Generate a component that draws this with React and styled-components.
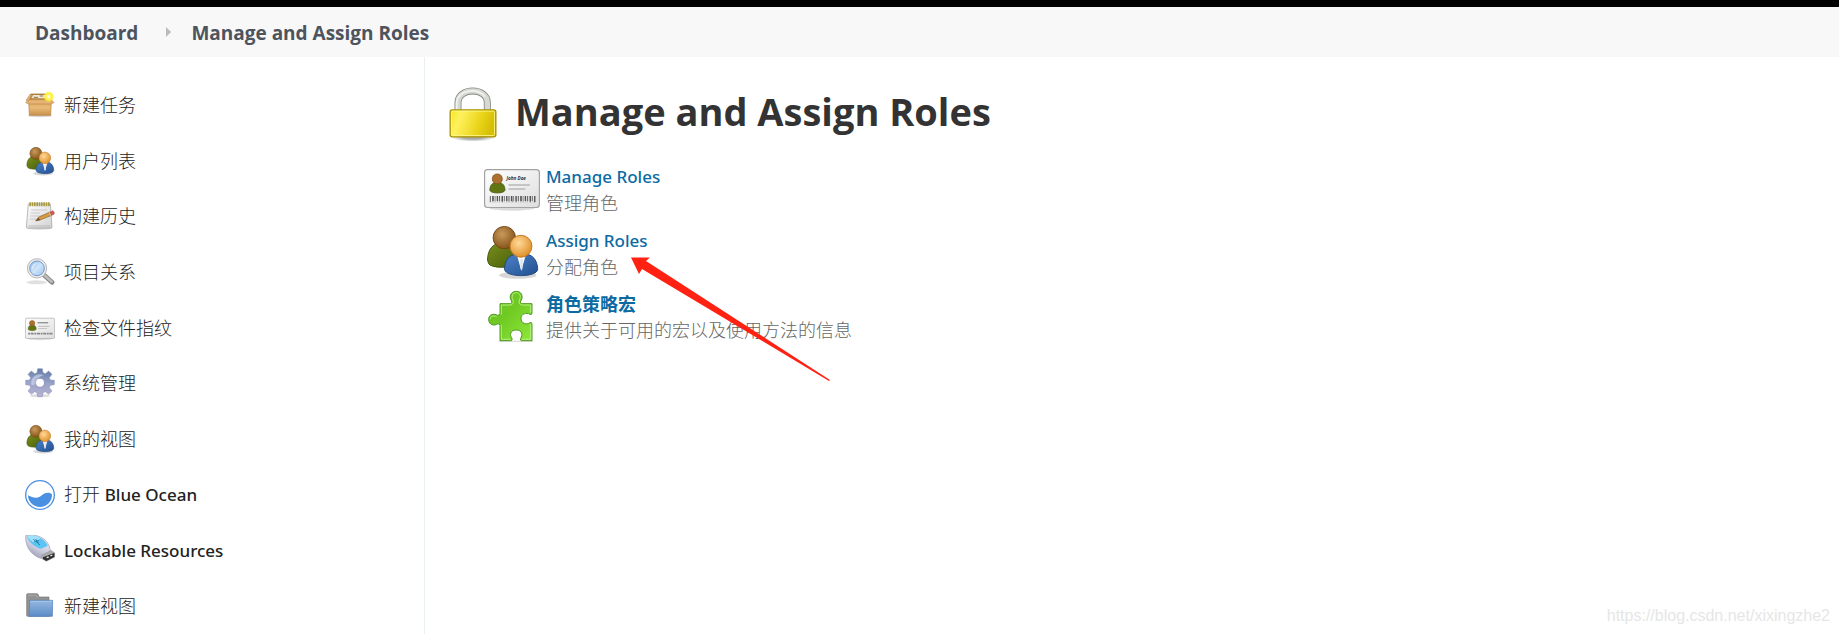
import React from "react";
import styled, { createGlobalStyle } from "styled-components";

function UsersIcon({ size }) {
  return (
    <Icon $size={size} viewBox="0 0 48 48" aria-hidden="true">
      <defs>
        <radialGradient id="headBack" cx="0.4" cy="0.35" r="0.65">
          <stop offset="0" stopColor="#c79a5a" />
          <stop offset="1" stopColor="#87541a" />
        </radialGradient>
        <radialGradient id="headFront" cx="0.4" cy="0.35" r="0.65">
          <stop offset="0" stopColor="#ffd999" />
          <stop offset="1" stopColor="#e0922c" />
        </radialGradient>
        <linearGradient id="bodyBack" x1="0" y1="0" x2="1" y2="1">
          <stop offset="0" stopColor="#7b8c1c" />
          <stop offset="1" stopColor="#46600b" />
        </linearGradient>
        <linearGradient id="bodyFront" x1="0" y1="0" x2="1" y2="1">
          <stop offset="0" stopColor="#4b80c8" />
          <stop offset="1" stopColor="#22508f" />
        </linearGradient>
      </defs>
      <ellipse cx="29" cy="44" rx="16" ry="3" fill="#000" opacity="0.16" />
      <path
        d="M3 31C3 22 8 16 14 17H22C28 19 31 26 27 35C23 38 6 38 4 34Z"
        fill="url(#bodyBack)"
        stroke="#3f560a"
        strokeWidth="0.8"
      />
      <circle cx="17.4" cy="11.7" r="9.6" fill="url(#headBack)" stroke="#714412" strokeWidth="0.8" />
      <path
        d="M17.6 39C17.6 31 22 26 28 26H37C43 27 46 33 46 39C45 46 19 46 17.6 39Z"
        fill="url(#bodyFront)"
        stroke="#1e467f"
        strokeWidth="0.8"
      />
      <path d="M28 26H36L32 40Z" fill="#fff" />
      <path d="M31.3 30H33.3L33 38L32 40L31 37Z" fill="#dbe4f0" />
      <circle cx="31.7" cy="19.1" r="9.4" fill="url(#headFront)" stroke="#bd7620" strokeWidth="0.8" />
    </Icon>
  );
}

function CardIcon({ size, name }) {
  return (
    <Icon $size={size} viewBox="0 0 48 48" aria-hidden="true">
      <defs>
        <linearGradient id="cardFill" x1="0" y1="0" x2="1" y2="1">
          <stop offset="0" stopColor="#fff" />
          <stop offset="1" stopColor="#dedede" />
        </linearGradient>
      </defs>
      <ellipse cx="24" cy="41" rx="20" ry="2.4" fill="#000" opacity="0.14" />
      <rect x="0.5" y="8.3" width="47" height="32.4" rx="2.5" fill="url(#cardFill)" stroke="#a2a2a2" />
      <path d="M5 26C5 21 8 19 11.4 19C15 19 18 21 18 26C17 29 6 29 5 26Z" fill="#607612" stroke="#44580a" strokeWidth="0.7" />
      <circle cx="11.4" cy="16.2" r="4.3" fill="#ae702e" stroke="#7e4b15" strokeWidth="0.6" />
      {name ? (
        <CardName x="19.2" y="17.4">
          {name}
        </CardName>
      ) : (
        <path d="M20 15.6H37" stroke="#888" strokeWidth="2" />
      )}
      <path d="M21 21.4H39.4M21 24.9H35.4" stroke="#c5c5c5" strokeWidth="1.7" />
      {name ? (
        <>
          <path d="M5 33.5H45" stroke="#555" strokeWidth="5.4" strokeDasharray="0.8 1.2 1.4 0.8 0.6 1.1 1.2 0.9" />
          <path d="M7 35.8H43" stroke="#eee" strokeWidth="1" strokeDasharray="2 1" />
        </>
      ) : (
        <path d="M5 33H45" stroke="#888" strokeWidth="3" strokeDasharray="3 1 5 1" />
      )}
    </Icon>
  );
}

function BoxIcon() {
  return (
    <Icon $size={30} viewBox="0 0 90 90" aria-hidden="true">
      <defs>
        <linearGradient id="boxFill" x1="0" y1="0" x2="0" y2="1">
          <stop offset="0" stopColor="#d59a4c" />
          <stop offset="0.5" stopColor="#e9bb79" />
          <stop offset="1" stopColor="#ca914c" />
        </linearGradient>
        <radialGradient id="boxStar">
          <stop offset="0" stopColor="#fff" />
          <stop offset="0.35" stopColor="#fff77a" />
          <stop offset="0.7" stopColor="#ffee28" />
          <stop offset="1" stopColor="#ffee28" stopOpacity="0.1" />
        </radialGradient>
      </defs>
      <ellipse cx="45" cy="77" rx="36" ry="5" fill="#000" opacity="0.15" />
      <path d="M17 12H70L78 29H10Z" fill="#b2843f" stroke="#9b6c30" strokeWidth="2" />
      <path d="M24 15H60L64 25H19Z" fill="#f1e7d4" />
      <path d="M26 22H39M44 18H54" stroke="#8c7352" strokeWidth="3" />
      <path d="M11 29H79L77 76H13Z" fill="url(#boxFill)" stroke="#b57f3c" strokeWidth="2" />
      <path d="M11 29L2 38L13 42H75L87 38L79 29Z" fill="#e5b474" stroke="#c18a45" strokeWidth="2" />
      <path d="M16 12L3 31L10 34L20 16Z" fill="#dfb077" stroke="#b98443" strokeWidth="1.5" />
      <circle cx="71" cy="20" r="16" fill="url(#boxStar)" />
    </Icon>
  );
}

function NotepadIcon() {
  return (
    <Icon $size={30} viewBox="0 0 90 90" aria-hidden="true">
      <defs>
        <linearGradient id="padFill" x1="0" y1="0" x2="1" y2="1">
          <stop offset="0" stopColor="#fff" />
          <stop offset="1" stopColor="#d2d2d2" />
        </linearGradient>
      </defs>
      <ellipse cx="43" cy="81" rx="38" ry="5" fill="#000" opacity="0.16" />
      <path d="M10 9H76L81 78Q81 81 78 81H7Q4 81 4 78Z" fill="url(#padFill)" stroke="#999" strokeWidth="2" />
      <path d="M10 75H76" stroke="#bbb" strokeWidth="3" />
      <path d="M13 10H75" stroke="#a89b45" strokeWidth="12" strokeDasharray="5 2" />
      <path d="M18 27H66M17 36H44M16 45H60M15 54H34" stroke="#c3c3c3" strokeWidth="2.5" />
      <path d="M32 60L40 49L75 33L80 43L45 57Z" fill="#d79a42" stroke="#8a602a" strokeWidth="2" />
      <path d="M32 60L40 50L46 57Z" fill="#765331" />
      <path d="M75 33L84 29Q90 34 87 40L79 43Z" fill="#dc5555" stroke="#a94545" strokeWidth="1.5" />
      <path d="M73 34L77 44" stroke="#ccc" strokeWidth="3" />
    </Icon>
  );
}

function SearchIcon() {
  return (
    <Icon $size={30} viewBox="0 0 90 90" aria-hidden="true">
      <defs>
        <linearGradient id="lens" x1="0" y1="0" x2="1" y2="1">
          <stop offset="0" stopColor="#8fbbed" />
          <stop offset="0.5" stopColor="#cfe4f9" />
          <stop offset="1" stopColor="#9dc4ee" />
        </linearGradient>
      </defs>
      <ellipse cx="35" cy="76" rx="31" ry="6" fill="#000" opacity="0.12" />
      <path d="M57 54L81 76" stroke="#858585" strokeWidth="14" strokeLinecap="round" />
      <path d="M57 53L80 74" stroke="#bcbcbc" strokeWidth="8" strokeLinecap="round" />
      <circle cx="36" cy="34" r="29" fill="#ececec" stroke="#aaa" strokeWidth="2.5" />
      <circle cx="36" cy="34" r="22" fill="url(#lens)" stroke="#6f9bce" strokeWidth="3" />
      <path d="M20 36Q20 19 37 18Q27 24 25 36Z" fill="#fff" opacity="0.5" />
    </Icon>
  );
}

function GearIcon() {
  return (
    <Icon $size={30} viewBox="0 0 90 90" aria-hidden="true">
      <defs>
        <linearGradient id="gearFill" gradientUnits="userSpaceOnUse" x1="50" y1="0" x2="40" y2="88">
          <stop offset="0" stopColor="#5f78a4" />
          <stop offset="0.5" stopColor="#9aa3c8" />
          <stop offset="1" stopColor="#b9b3d4" />
        </linearGradient>
      </defs>
      <ellipse cx="45" cy="83" rx="30" ry="5" fill="#000" opacity="0.14" />
      <path
        d="M38 2H52L54 14L61 17L71 9L81 19L73 29L76 36L88 37V50L76 52L73 59L81 69L71 79L61 71L54 74L52 86H38L36 74L29 71L19 79L9 69L17 59L14 52L2 50V37L14 36L17 29L9 19L19 9L29 17L36 14Z"
        fill="url(#gearFill)"
        stroke="#8590b5"
        strokeWidth="1.5"
        strokeLinejoin="round"
      />
      <path d="M20 51A25 25 0 0 1 56 22Q40 26 37 39T20 51Z" fill="#d5e0f4" opacity="0.6" />
      <circle cx="45" cy="44" r="17" fill="#8f94bd" opacity="0.4" />
      <circle cx="45" cy="44" r="12" fill="#fff" />
    </Icon>
  );
}

function OceanIcon() {
  return (
    <Icon $size={30} viewBox="0 0 90 90" aria-hidden="true">
      <circle cx="45" cy="45" r="43" fill="#fff" stroke="#4a90e2" strokeWidth="4" />
      <path d="M9 46C18 50 24 53 33 53C48 53 53 38 68 38C74 38 78 40 81 43C82 64 66 81 45 81C25 81 9 66 9 46Z" fill="#4a90e2" />
    </Icon>
  );
}

function UsbIcon() {
  return (
    <Icon $size={30} viewBox="0 0 90 90" aria-hidden="true">
      <defs>
        <linearGradient id="usbBody" x1="0.8" y1="0" x2="0.2" y2="1">
          <stop offset="0" stopColor="#f2f2fb" />
          <stop offset="0.6" stopColor="#c9c9dc" />
          <stop offset="1" stopColor="#8d8da8" />
        </linearGradient>
      </defs>
      <path d="M2 2C20 -4 49 3 61 16C72 27 76 40 76 50L47 70C31 65 12 50 6 31Q1 17 2 2Z" fill="url(#usbBody)" stroke="#9998b1" strokeWidth="2" />
      <path d="M6 3C22 -2 44 5 55 14C62 21 67 27 68 33L47 41C29 36 10 21 6 3Z" fill="#5ac4f2" />
      <path d="M6 3L22 1Q38 4 48 10L24 22Q11 14 6 3Z" fill="#a0e2fb" />
      <path d="M25 13L45 30M32 12L40 24M28 20L42 17" stroke="#2c7fb0" strokeWidth="3" />
      <path d="M50 60L78 46L90 54V66L64 79L50 71Z" fill="#aaa" stroke="#888" strokeWidth="1" />
      <path d="M54 67L88 54V66L64 78L54 72Z" fill="#303030" />
      <path d="M65 68L71 66M76 63L82 60" stroke="#eee" strokeWidth="4" />
    </Icon>
  );
}

function FolderIcon() {
  return (
    <Icon $size={30} viewBox="0 0 90 90" aria-hidden="true">
      <defs>
        <linearGradient id="folderFront" x1="0" y1="0" x2="0" y2="1">
          <stop offset="0" stopColor="#95b7df" />
          <stop offset="1" stopColor="#5c8dc8" />
        </linearGradient>
      </defs>
      <path d="M5 11Q5 8 8 8H36Q40 8 41 15L42 18H72V76H8Q5 76 5 73Z" fill="#929292" stroke="#777" strokeWidth="2" />
      <path d="M9 13H35L37 21" fill="none" stroke="#b4b4b4" strokeWidth="2" />
      <path d="M14 28H83L82 76H12Z" fill="url(#folderFront)" stroke="#4a7db9" strokeWidth="2" />
      <path d="M17 31H80" stroke="#b7d0ed" strokeWidth="2" />
    </Icon>
  );
}

function LockIcon() {
  return (
    <Icon $size={56} viewBox="0 0 168 168" aria-hidden="true">
      <defs>
        <linearGradient id="lockFill" x1="0" y1="0" x2="1" y2="0.2">
          <stop offset="0" stopColor="#f7e51f" />
          <stop offset="0.25" stopColor="#fff15e" />
          <stop offset="0.7" stopColor="#ead51b" />
          <stop offset="1" stopColor="#d6be04" />
        </linearGradient>
        <radialGradient id="lockShadow">
          <stop offset="0.4" stopColor="#000" stopOpacity="0.35" />
          <stop offset="1" stopColor="#000" stopOpacity="0" />
        </radialGradient>
      </defs>
      <ellipse cx="84" cy="154" rx="66" ry="13" fill="url(#lockShadow)" />
      <path d="M39 75V50C39 3 127 3 127 50V75" fill="none" stroke="#868883" strokeWidth="21" />
      <path d="M39 75V50C39 3 127 3 127 50V75" fill="none" stroke="#d5d9d2" strokeWidth="16" />
      <path d="M35 70V50C38 9 103 5 120 32" fill="none" stroke="#f0f2ee" strokeWidth="5" />
      <rect x="15.5" y="71.5" width="137" height="81" rx="6" fill="url(#lockFill)" stroke="#a79308" strokeWidth="4" />
      <rect x="19.5" y="75.5" width="129" height="73" rx="3" fill="none" stroke="#fff68b" strokeWidth="2.5" />
    </Icon>
  );
}

function PuzzleIcon() {
  return (
    <Icon $size={56} viewBox="0 0 168 168" aria-hidden="true">
      <defs>
        <linearGradient id="puzzleFill" x1="0" y1="0" x2="1" y2="1">
          <stop offset="0" stopColor="#6bbd2b" />
          <stop offset="0.45" stopColor="#70ca22" />
          <stop offset="1" stopColor="#91e83c" />
        </linearGradient>
      </defs>
      <path d="M44 160H147" stroke="#ddd" strokeWidth="4" />
      <path
        d="M48 47H79Q86 46 83 39C75 32 77 10 97 10C117 10 117 32 110 39Q107 46 113 47H144V75Q144 81 138 79C127 72 111 78 111 91C111 106 128 112 138 104Q144 102 144 108V158H112Q108 158 110 151C116 142 116 126 97 126C78 126 76 142 84 151Q86 158 80 158H48V112Q46 105 40 108C32 114 14 112 14 94C14 78 32 76 40 82Q46 83 48 77Z"
        fill="url(#puzzleFill)"
        stroke="#4e9a20"
        strokeWidth="3"
      />
      <path
        d="M52 80V51H82Q91 45 87 36C81 26 86 14 97 14C109 14 112 26 106 36Q103 49 113 51H140V73M52 110V154H79M114 154H140V108M18 94C18 84 29 82 38 86"
        fill="none"
        stroke="#b5ef81"
        strokeWidth="3"
      />
    </Icon>
  );
}

const tasks = [
  { label: "新建任务", icon: <BoxIcon /> },
  { label: "用户列表", icon: <UsersIcon size={30} /> },
  { label: "构建历史", icon: <NotepadIcon /> },
  { label: "项目关系", icon: <SearchIcon /> },
  { label: "检查文件指纹", icon: <CardIcon size={30} /> },
  { label: "系统管理", icon: <GearIcon /> },
  { label: "我的视图", icon: <UsersIcon size={30} /> },
  { label: "打开 ", latin: "Blue Ocean", icon: <OceanIcon /> },
  { latin: "Lockable Resources", icon: <UsbIcon /> },
  { label: "新建视图", icon: <FolderIcon /> },
];

const options = [
  { latin: "Manage Roles", text: "管理角色", icon: <CardIcon size={56} name="John Doe" /> },
  { latin: "Assign Roles", text: "分配角色", icon: <UsersIcon size={56} />, arrow: true },
  { title: "角色策略宏", text: "提供关于可用的宏以及使用方法的信息", icon: <PuzzleIcon /> },
];

function App() {
  return (
    <Page>
      <GlobalStyle />
      <Breadcrumbs aria-label="Breadcrumb">
        <Crumb href="#dashboard">Dashboard</Crumb>
        <Separator viewBox="0 0 5 10" aria-hidden="true">
          <path d="M0 0L5 5L0 10Z" fill="#bbb" />
        </Separator>
        <Crumb href="#roles">Manage and Assign Roles</Crumb>
      </Breadcrumbs>
      <Body>
        <SidePanel>
          <Tasks>
            {tasks.map((task, i) => (
              <Task key={i}>
                <TaskLink href="#task">
                  {task.icon}
                  <span>
                    {task.label}
                    {task.latin && <Latin>{task.latin}</Latin>}
                  </span>
                </TaskLink>
              </Task>
            ))}
          </Tasks>
        </SidePanel>
        <Main>
          <Heading>
            <LockIcon />
            <Title>Manage and Assign Roles</Title>
          </Heading>
          <Options>
            {options.map((option, i) => (
              <Option key={i}>
                {option.icon}
                <OptionBody>
                  <OptionLink href="#option">
                    {option.title}
                    {option.latin && <Latin>{option.latin}</Latin>}
                  </OptionLink>
                  <OptionText>{option.text}</OptionText>
                </OptionBody>
                {option.arrow && (
                  <Arrow viewBox="0 0 200 124" aria-hidden="true">
                    <path d="M0 0.5H19L15 4L199 123L198 124L11 12L8 17Z" fill="#ff2112" />
                  </Arrow>
                )}
              </Option>
            ))}
          </Options>
        </Main>
      </Body>
      <Watermark>https://blog.csdn.net/xixingzhe2</Watermark>
    </Page>
  );
}

const GlobalStyle = createGlobalStyle`
  * {
    box-sizing: border-box;
  }
  body {
    margin: 0;
    background: #fff;
    color: #333;
    font-family: "Open Sans", "Noto Sans CJK SC", sans-serif;
    font-size: 18px;
  }
  a {
    text-decoration: none;
  }
`;
const Page = styled.div`
  position: relative;
  display: flex;
  flex-direction: column;
  min-height: 100vh;
  border-top: 7px solid #000;
`;
const Icon = styled.svg`
  display: block;
  flex: none;
  width: ${(props) => props.$size}px;
  height: ${(props) => props.$size}px;
`;
const CardName = styled.text`
  font-size: 4px;
  font-weight: 700;
  font-style: italic;
  fill: #333;
`;
const Latin = styled.span`
  font-family: "Noto Sans", sans-serif;
  font-size: 17px;
  font-weight: 500;
`;
const Breadcrumbs = styled.nav`
  display: flex;
  align-items: center;
  height: 50px;
  padding: 2px 35px 0;
  background: #f8f8f8;
`;
const Crumb = styled.a`
  color: #4d545d;
  font-size: 19px;
  font-weight: 700;
  line-height: 28px;
`;
const Separator = styled.svg`
  width: 5px;
  height: 10px;
  margin: 0 20px 2px 28px;
`;
const Body = styled.div`
  display: flex;
  flex: 1;
`;
const SidePanel = styled.aside`
  display: flex;
  flex: none;
  width: 425px;
  padding-top: 20px;
  border-right: 1px solid #eaeff2;
`;
const Tasks = styled.ul`
  display: flex;
  flex: 1;
  flex-direction: column;
  margin: 0;
  padding: 0 25px;
  list-style: none;
`;
const Task = styled.li`
  display: flex;
  flex: 1;
  align-items: center;
  min-height: 40px;
`;
const TaskLink = styled.a`
  display: flex;
  align-items: center;
  gap: 9px;
  color: #222;
  font-weight: 300;
  line-height: 24px;
`;
const Main = styled.main`
  flex: 1;
  padding: 29px 20px;
`;
const Heading = styled.div`
  display: flex;
  align-items: flex-start;
  gap: 14px;
`;
const Title = styled.h1`
  margin: 0;
  font-size: 38px;
  font-weight: 700;
  line-height: 50px;
`;
const Options = styled.div`
  display: flex;
  flex-direction: column;
  padding: 14px 0 0 39px;
`;
const Option = styled.div`
  position: relative;
  display: flex;
  align-items: center;
  gap: 6px;
  height: 64px;
`;
const OptionBody = styled.div`
  padding-top: 2px;
`;
const OptionLink = styled.a`
  display: block;
  color: #0b6aa2;
  font-weight: 700;
  line-height: 26px;
`;
const OptionText = styled.div`
  color: #666;
  font-weight: 300;
  line-height: 26px;
`;
const Arrow = styled.svg`
  position: absolute;
  top: 37px;
  left: 147px;
  width: 200px;
  height: 124px;
  z-index: 1;
  pointer-events: none;
`;
const Watermark = styled.div`
  position: absolute;
  right: 9px;
  bottom: 8px;
  color: #e6e6e6;
  font-family: "Liberation Sans", sans-serif;
  font-size: 16px;
  line-height: 20px;
`;
export default App;
